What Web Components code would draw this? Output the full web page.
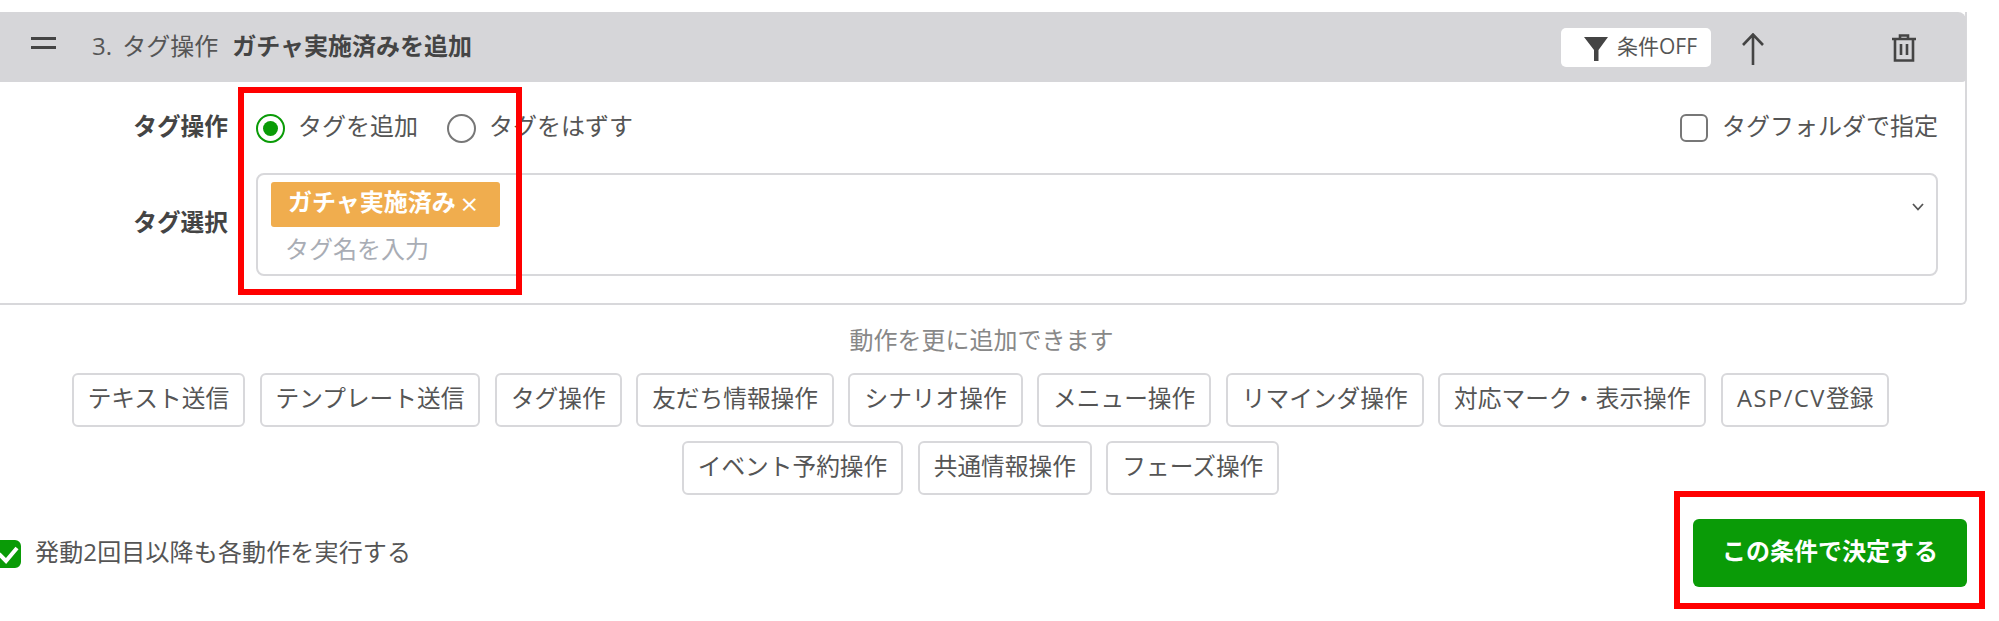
<!DOCTYPE html>
<html lang="ja">
<head>
<meta charset="utf-8">
<title>タグ操作</title>
<style>
    html, body {
        margin: 0;
        padding: 0;
        background: #fff;
    }
    body {
        position: relative;
        width: 1999px;
        height: 621px;
        overflow: hidden;
        font-family: "Open Sans", "Noto Sans CJK JP", sans-serif;
        font-size: 24px;
        color: #555;
    }
    .mark-a { left: 238px; top: 87px; width: 284px; height: 208px; }
    .mark-b { left: 1674px; top: 491px; width: 311px; height: 118px; }
    .wide { letter-spacing: 1.5px; }
</style>
</head>
<body>
<step-card index="3. タグ操作" summary="ガチャ実施済みを追加">
    <form-row label="タグ操作" slot="rows">
        <radio-option checked>タグを追加</radio-option>
        <radio-option>タグをはずす</radio-option>
        <check-option slot="end">タグフォルダで指定</check-option>
    </form-row>
    <form-row label="タグ選択" slot="rows">
        <tag-select placeholder="タグ名を入力">
            <tag-chip>ガチャ実施済み</tag-chip>
        </tag-select>
    </form-row>
</step-card>

<action-list hint="動作を更に追加できます">
    <action-button>テキスト送信</action-button>
    <action-button>テンプレート送信</action-button>
    <action-button>タグ操作</action-button>
    <action-button>友だち情報操作</action-button>
    <action-button>シナリオ操作</action-button>
    <action-button>メニュー操作</action-button>
    <action-button>リマインダ操作</action-button>
    <action-button>対応マーク・表示操作</action-button>
    <action-button><span class="wide">ASP/CV</span>登録</action-button>
    <action-button>イベント予約操作</action-button>
    <action-button>共通情報操作</action-button>
    <action-button>フェーズ操作</action-button>
</action-list>

<form-footer>
    <check-option checked slot="start">発動2回目以降も各動作を実行する</check-option>
    <submit-button slot="end">この条件で決定する</submit-button>
</form-footer>

<red-mark class="mark-a"></red-mark>
<red-mark class="mark-b"></red-mark>

<script>
class stepCard extends HTMLElement{
    constructor(){
        super();
        this.shadowDOM = this.attachShadow({mode: 'open'});
    }
    connectedCallback(){
        this.shadowDOM.innerHTML = `
        <style>
    :host {
        display: block;
        box-sizing: border-box;
        width: 1967px;
        height: 293px;
        margin-top: 12px;
        border-right: 2px solid #d8d8db;
        border-bottom: 2px solid #d8d8db;
        border-bottom-right-radius: 6px;
    }
    .head {
        display: flex;
        align-items: center;
        box-sizing: border-box;
        height: 70px;
        width: 1966px;
        padding: 0 50px 0 31px;
        background: #d6d6d9;
        border-radius: 0 8px 4px 0;
    }
    .handle {
        display: block;
        width: 25px;
        height: 12px;
        border-top: 3px solid #444;
        border-bottom: 3px solid #444;
        box-sizing: border-box;
        margin-top: -8px;
    }
    .index {
        margin-left: 36px;
        line-height: 34px;
        color: #555;
        word-spacing: 4px;
        margin-top: -2px;
    }
    .summary {
        margin-left: 14px;
        line-height: 34px;
        font-weight: 700;
        color: #444;
        margin-top: -2px;
    }
    .filter {
        display: flex;
        align-items: center;
        box-sizing: border-box;
        width: 150px;
        height: 39px;
        margin-left: auto;
        padding-left: 23px;
        background: #fff;
        border-radius: 5px;
        font-size: 21px;
        color: #555;
    }
    .filter svg { margin-right: 9px; margin-top: 4px; }
    .filter span { margin-top: -5px; }
    .arrow { margin-left: 31px; margin-top: 4px; }
    .trash { margin-left: 128px; margin-top: 2px; }
    .rows { padding: 28px 27px 0 0; }
    ::slotted(form-row:last-child) { margin-top: 27px; }
        </style>
        <div class="head">
            <span class="handle"></span>
            <span class="index">${this.getAttribute('index')}</span>
            <span class="summary">${this.getAttribute('summary')}</span>
            <span class="filter">
                <svg width="24" height="24" viewBox="0 0 24 24"><path d="M0 0H24L14.5 13V24H10V13Z" fill="#444"/></svg>
                <span>条件OFF</span>
            </span>
            <svg class="arrow" width="22" height="32" viewBox="0 0 22 32" fill="none" stroke="#444" stroke-width="2.6"><path d="M11 32V1.5M1 12L11 1.5L21 12"/></svg>
            <svg class="trash" width="24" height="28" viewBox="0 0 24 28" fill="none" stroke="#444" stroke-width="2.6"><path d="M0 5H24M8 5V1.5H16V5M3 5V26.5H21V5M9 10V21M15 10V21"/></svg>
        </div>
        <div class="rows"><slot name="rows"></slot></div>
        `;
    }
}

class formRow extends HTMLElement{
    constructor(){
        super();
        this.shadowDOM = this.attachShadow({mode: 'open'});
    }
    connectedCallback(){
        this.shadowDOM.innerHTML = `
        <style>
    :host {
        display: grid;
        grid-template-columns: 228px 1fr;
        column-gap: 28px;
        align-items: center;
        min-height: 36px;
    }
    .label {
        text-align: right;
        font-weight: 700;
        font-size: 23.7px;
        line-height: 34px;
        color: #444;
        margin-top: -5px;
    }
    .body {
        display: flex;
        align-items: center;
    }
    .end { margin-left: auto; display: flex; }
    ::slotted(radio-option) { margin-right: 29px; }
    ::slotted(tag-select) { flex: 1; }
        </style>
        <div class="label">${this.getAttribute('label')}</div>
        <div class="body">
            <slot></slot>
            <div class="end"><slot name="end"></slot></div>
        </div>
        `;
    }
}

class radioOption extends HTMLElement{
    constructor(){
        super();
        this.shadowDOM = this.attachShadow({mode: 'open'});
    }
    connectedCallback(){
        const on = this.hasAttribute('checked');
        this.shadowDOM.innerHTML = `
        <style>
    :host {
        display: inline-flex;
        align-items: center;
        gap: 13px;
        line-height: 34px;
        color: #555;
    }
    .dot {
        display: flex;
        align-items: center;
        justify-content: center;
        box-sizing: border-box;
        width: 29px;
        height: 29px;
        border-radius: 50%;
        border: 2.5px solid ${on ? '#0a9b07' : '#777'};
    }
    .dot i {
        display: ${on ? 'block' : 'none'};
        width: 15px;
        height: 15px;
        border-radius: 50%;
        background: #0a9b07;
    }
    span.text { margin-top: -4px; }
        </style>
        <span class="dot"><i></i></span>
        <span class="text"><slot></slot></span>
        `;
    }
}

class checkOption extends HTMLElement{
    constructor(){
        super();
        this.shadowDOM = this.attachShadow({mode: 'open'});
    }
    connectedCallback(){
        const on = this.hasAttribute('checked');
        this.shadowDOM.innerHTML = `
        <style>
    :host {
        display: inline-flex;
        align-items: center;
        gap: 14px;
        line-height: 34px;
        color: #555;
        ${on ? 'letter-spacing: .15px;' : ''}
    }
    .box {
        display: flex;
        box-sizing: border-box;
        width: 28px;
        height: 28px;
        border-radius: 6px;
        border: 2px solid ${on ? '#0a9b07' : '#777'};
        background: ${on ? '#0a9b07' : '#fff'};
    }
    span.text { margin-top: -4px; }
        </style>
        <span class="box">${on ? '<svg width="24" height="24" viewBox="0 0 24 24" fill="none" stroke="#fff" stroke-width="4"><path d="M4 12L11 19L22 6"/></svg>' : ''}</span>
        <span class="text"><slot></slot></span>
        `;
    }
}

class tagSelect extends HTMLElement{
    constructor(){
        super();
        this.shadowDOM = this.attachShadow({mode: 'open'});
    }
    connectedCallback(){
        this.shadowDOM.innerHTML = `
        <style>
    :host {
        display: flex;
        box-sizing: border-box;
        height: 103px;
        padding: 7px 12px 0 13px;
        border: 2px solid #d8d8db;
        border-radius: 8px;
        background: #fff;
    }
    .values { flex: 1; }
    .input {
        padding: 5px 0 0 14px;
        line-height: 34px;
        color: #a9adb5;
    }
    svg { margin-top: 21px; }
        </style>
        <div class="values">
            <slot></slot>
            <div class="input">${this.getAttribute('placeholder')}</div>
        </div>
        <svg width="12" height="8" viewBox="0 0 12 8" fill="none" stroke="#555" stroke-width="1.8"><path d="M1 1L6 6.5L11 1"/></svg>
        `;
    }
}

class tagChip extends HTMLElement{
    constructor(){
        super();
        this.shadowDOM = this.attachShadow({mode: 'open'});
    }
    connectedCallback(){
        this.shadowDOM.innerHTML = `
        <style>
    :host {
        display: flex;
        align-items: center;
        box-sizing: border-box;
        width: 229px;
        height: 45px;
        padding: 0 0 5px 17px;
        background: #f0ad4e;
        border-radius: 3px;
        color: #fff;
        font-weight: 700;
        line-height: 34px;
    }
    .close {
        margin-left: 5px;
        font-weight: 400;
        font-size: 30px;
        margin-top: 3px;
    }
        </style>
        <slot></slot><span class="close">×</span>
        `;
    }
}

class actionList extends HTMLElement{
    constructor(){
        super();
        this.shadowDOM = this.attachShadow({mode: 'open'});
    }
    connectedCallback(){
        this.shadowDOM.innerHTML = `
        <style>
    :host {
        display: block;
        width: 1961px;
        margin-top: 18px;
    }
    .hint {
        text-align: center;
        line-height: 34px;
        color: #888;
        margin-bottom: 16px;
        padding-left: 2px;
    }
    .buttons {
        display: flex;
        flex-wrap: wrap;
        justify-content: center;
        gap: 14px 14.5px;
    }
        </style>
        <div class="hint">${this.getAttribute('hint')}</div>
        <div class="buttons"><slot></slot></div>
        `;
    }
}

class actionButton extends HTMLElement{
    constructor(){
        super();
        this.shadowDOM = this.attachShadow({mode: 'open'});
    }
    connectedCallback(){
        this.shadowDOM.innerHTML = `
        <style>
    :host {
        display: flex;
        align-items: center;
        box-sizing: border-box;
        height: 54px;
        padding: 0 14px 4px;
        border: 2px solid #d8d8db;
        border-radius: 6px;
        background: #fff;
        font-size: 23.7px;
        line-height: 34px;
        color: #555;
    }
        </style>
        <slot></slot>
        `;
    }
}

class formFooter extends HTMLElement{
    constructor(){
        super();
        this.shadowDOM = this.attachShadow({mode: 'open'});
    }
    connectedCallback(){
        this.shadowDOM.innerHTML = `
        <style>
    :host {
        display: flex;
        align-items: center;
        justify-content: space-between;
        width: 1967px;
        margin-top: 24px;
    }
    ::slotted(check-option) { margin-left: -7px; margin-top: 1px; }
        </style>
        <slot name="start"></slot>
        <slot name="end"></slot>
        `;
    }
}

class submitButton extends HTMLElement{
    constructor(){
        super();
        this.shadowDOM = this.attachShadow({mode: 'open'});
    }
    connectedCallback(){
        this.shadowDOM.innerHTML = `
        <style>
    :host {
        display: flex;
        align-items: center;
        justify-content: center;
        box-sizing: border-box;
        width: 274px;
        height: 68px;
        padding-bottom: 4px;
        background: #0a9b07;
        border-radius: 6px;
        color: #fff;
        font-weight: 700;
        line-height: 34px;
    }
        </style>
        <slot></slot>
        `;
    }
}

class redMark extends HTMLElement{
    constructor(){
        super();
        this.shadowDOM = this.attachShadow({mode: 'open'});
    }
    connectedCallback(){
        this.shadowDOM.innerHTML = `
        <style>
    :host {
        display: block;
        position: absolute;
        box-sizing: border-box;
        border: 6px solid #f00;
    }
        </style>
        `;
    }
}

customElements.define('step-card', stepCard);
customElements.define('form-row', formRow);
customElements.define('radio-option', radioOption);
customElements.define('check-option', checkOption);
customElements.define('tag-select', tagSelect);
customElements.define('tag-chip', tagChip);
customElements.define('action-list', actionList);
customElements.define('action-button', actionButton);
customElements.define('form-footer', formFooter);
customElements.define('submit-button', submitButton);
customElements.define('red-mark', redMark);
</script>
</body>
</html>
